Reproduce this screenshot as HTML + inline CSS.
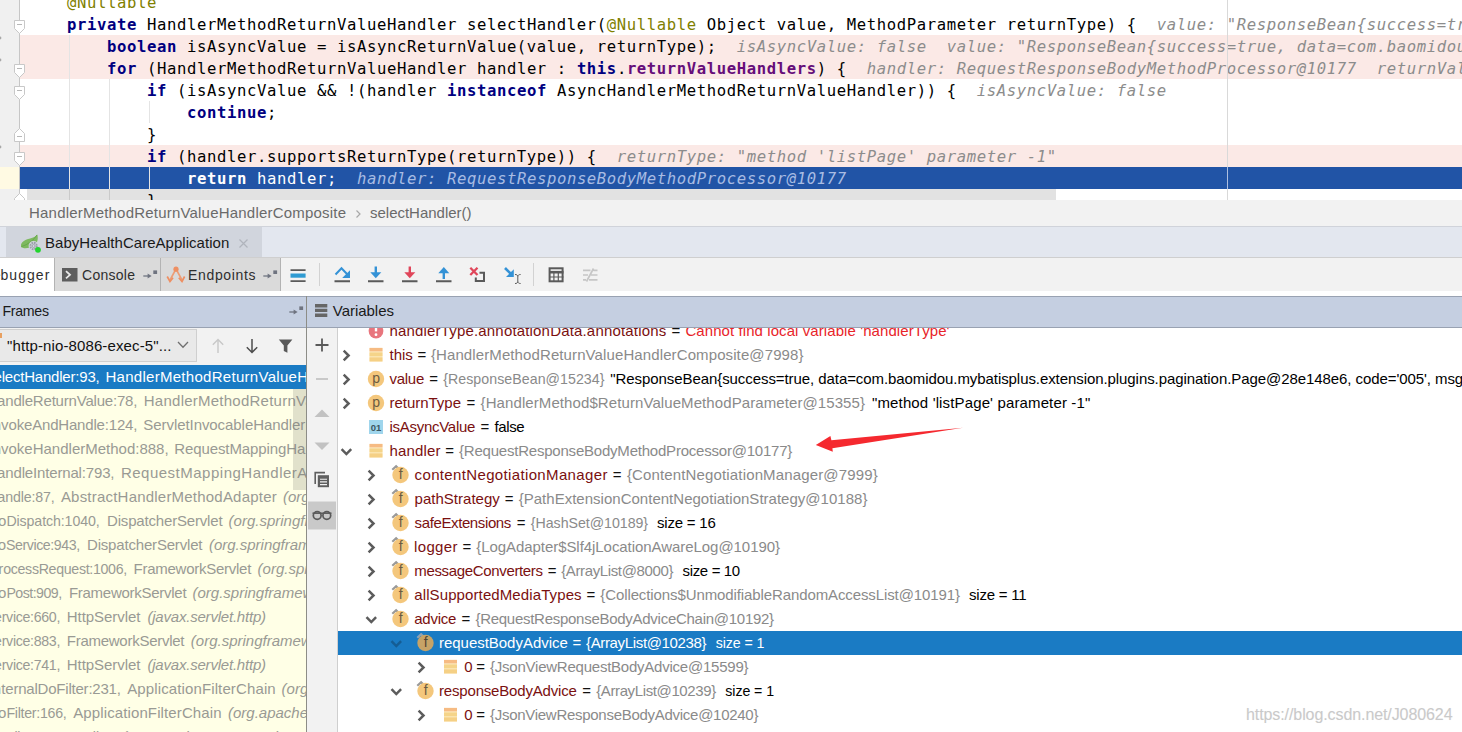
<!DOCTYPE html>
<html lang="en">
<head>
<meta charset="utf-8">
<title>Debugger</title>
<style>
*{box-sizing:border-box;margin:0;padding:0}
html,body{width:1462px;height:732px;overflow:hidden;background:#fff}
body{position:relative;font-family:"Liberation Sans",sans-serif;color:#000}
.abs{position:absolute}
/* ---------- editor ---------- */
#editor{position:absolute;left:0;top:0;width:1462px;height:200px;background:#fff;overflow:hidden}
#gutter{position:absolute;left:0;top:0;width:20px;height:200px;background:#f0f0f0;border-right:1px solid #c9c9c9}
.ln{position:absolute;left:20px;width:1442px;height:22px}
.ln.bp{background:#fbe9e6}
.ln.cur{background:#2154a6}
.code{margin-top:1px;position:absolute;left:27px;height:22px;line-height:22px;white-space:pre;font-family:"DejaVu Sans Mono","Liberation Mono",monospace;font-size:15.6px;color:#000;letter-spacing:0.609px}
.k{color:#000080;font-weight:bold}
.an{color:#808000}
.fd{color:#660e7a;font-weight:bold}
.h{color:#8c8c8c;font-style:italic}
.cur .h, .code.w .h{color:#a8bce3}
.code.w{color:#fff}
.code.w .k{color:#fff}
.guide{position:absolute;top:0;width:1px;background:#e4e4e4}
#margin{position:absolute;left:1227px;top:0;width:1px;height:200px;background:#d9d9d9;z-index:4}
/* ---------- bars ---------- */
#hscroll{position:absolute;left:20px;top:189px;width:1442px;height:11px;background:transparent}
#hthumb{position:absolute;left:7px;top:0;width:1029px;height:11px;background:rgba(0,0,0,.115)}
#crumbs{position:absolute;left:0;top:200px;width:1462px;height:26px;background:#f2f2f2;color:#6a6a6a;font-size:14.5px;line-height:27px;white-space:pre}
#tabbar{position:absolute;left:0;top:226px;width:1462px;height:31px;background:#e3e7ef;border-top:1px solid #d0d3da}
#tab1{position:absolute;left:6px;top:0;width:256px;height:30px;background:#d1d5dd}
#toolbar{position:absolute;left:0;top:257px;width:1462px;height:34px;background:#f2f2f2;border-top:1px solid #cfcfcf}
#strip{position:absolute;left:0;top:291px;width:1462px;height:6px;background:#fff}
#hdr{position:absolute;left:0;top:296px;width:1462px;height:32px;background:#c5cfe1;border-top:1px solid #99a2b2;border-bottom:1px solid #99a2b2;z-index:3}
/* ---------- frames ---------- */
#frames{position:absolute;left:0;top:327px;width:306px;height:405px;background:#ffffe6;overflow:hidden}
#vdiv{position:absolute;left:306px;top:296px;width:1px;height:436px;background:#8d8d87;z-index:4}
#vtools{position:absolute;left:307px;top:327px;width:31px;height:405px;background:#f2f2f2;border-right:1px solid #cfcfcf}
#vars{position:absolute;left:338px;top:327px;width:1124px;height:405px;background:#fff;overflow:hidden}

.t{position:absolute;white-space:pre;font-size:15px;line-height:20px;height:20px}
.pin{position:absolute}
.tbtab{position:absolute;top:0;height:34px;background:#dadada;border:1px solid #b3b3b3;border-top:0}

.fr{position:absolute;left:0;width:306px;height:24px;color:#999a94}
.fr span{position:absolute;top:2px;white-space:pre;font-size:15px;line-height:20px;height:20px}
.fr .pk{font-style:italic}
.fr.sel{background:#1a7bc4;color:#fff}
.vr{position:absolute;left:0;width:1124px;height:24px}
.vr.sel{background:#1a7bc4}
.vr .tx{position:absolute;top:2px;white-space:pre;font-size:15px;line-height:20px;height:20px;color:#000}
.vr .n{color:#7a1010}
.vr .g{color:#8a8a8a}
.vr .e{color:#e8242a}
.vr.sel .tx,.vr.sel .n,.vr.sel .g{color:#fff}
.vr .q{color:#111}
.vr svg{position:absolute}
</style>
</head>
<body>
<div id="editor">
  <div id="gutter"></div>
  <div class="ln bp" style="top:35px"></div>
  <div class="ln bp" style="top:57px"></div>
  <div class="ln bp" style="top:145px"></div>
  <div class="ln cur" style="top:167px"></div>
  <div id="curgut" class="abs" style="left:0;top:167px;width:20px;height:22px;background:#fffae3"></div>
  <div class="guide" style="left:69px;top:35px;height:165px"></div>
  <div class="guide" style="left:109px;top:79px;height:121px"></div>
  <div class="guide" style="left:149px;top:101px;height:22px"></div>
  <div class="guide" style="left:149px;top:167px;height:22px"></div>
  <div class="code" style="top:-9px">    <span class="an">@Nullable</span></div>
  <div class="code" style="top:13px">    <span class="k">private</span> HandlerMethodReturnValueHandler selectHandler(<span class="an">@Nullable</span> Object value, MethodParameter returnType) {  <span class="h">value: "ResponseBean{success=true, data=com.baomidou</span></div>
  <div class="code" style="top:35px">        <span class="k">boolean</span> isAsyncValue = isAsyncReturnValue(value, returnType);  <span class="h">isAsyncValue: false  value: "ResponseBean{success=true, data=com.baomidou.mybatisplus</span></div>
  <div class="code" style="top:57px">        <span class="k">for</span> (HandlerMethodReturnValueHandler handler : <span class="k">this</span>.<span class="fd">returnValueHandlers</span>) {  <span class="h">handler: RequestResponseBodyMethodProcessor@10177  returnValueHandlers:  size = 15</span></div>
  <div class="code" style="top:79px">            <span class="k">if</span> (isAsyncValue &amp;&amp; !(handler <span class="k">instanceof</span> AsyncHandlerMethodReturnValueHandler)) {  <span class="h">isAsyncValue: false</span></div>
  <div class="code" style="top:101px">                <span class="k">continue</span>;</div>
  <div class="code" style="top:123px">            }</div>
  <div class="code" style="top:145px">            <span class="k">if</span> (handler.supportsReturnType(returnType)) {  <span class="h">returnType: "method 'listPage' parameter -1"</span></div>
  <div class="code w" style="top:167px">                <span class="k">return</span> handler;  <span class="h">handler: RequestResponseBodyMethodProcessor@10177</span></div>
  <div class="code" style="top:189px">            }</div>
</div>
<div id="margin"></div>
<div class="abs" style="left:1227px;top:167px;width:1px;height:22px;background:#aebfe0;z-index:5"></div>
<div id="gut2" class="abs" style="left:0;top:189px;width:20px;height:11px;background:#f0f0f0"></div>
<svg id="folds" class="abs" style="left:0;top:0;z-index:5" width="30" height="200" viewBox="0 0 30 200"><path d="M19.5 0V200" stroke="#c6c6c6"/><path d="M14.5 20.5h10v8l-5 5l-5 -5z" fill="#fff" stroke="#c8c8c8"/><path d="M17 24.5h5" stroke="#b8b8b8"/><path d="M14.5 64.5h10v8l-5 5l-5 -5z" fill="#fff" stroke="#c8c8c8"/><path d="M17 68.5h5" stroke="#b8b8b8"/><path d="M14.5 86.5h10v8l-5 5l-5 -5z" fill="#fff" stroke="#c8c8c8"/><path d="M17 90.5h5" stroke="#b8b8b8"/><path d="M19.5 128.5l5 5v8h-10v-8z" fill="#fff" stroke="#c8c8c8"/><path d="M17 136.5h5" stroke="#b8b8b8"/><path d="M14.5 152.5h10v8l-5 5l-5 -5z" fill="#fff" stroke="#c8c8c8"/><path d="M17 156.5h5" stroke="#b8b8b8"/><path d="M19.5 193.5l5 5v8h-10v-8z" fill="#fff" stroke="#c8c8c8"/><path d="M17 201.5h5" stroke="#b8b8b8"/><circle cx="0" cy="38" r="1.4" fill="#a8a8a8"/><circle cx="0" cy="60" r="1.4" fill="#a8a8a8"/><circle cx="0" cy="147" r="1.4" fill="#a8a8a8"/></svg>
<div id="hscroll"><div id="hthumb"></div></div>
<div id="crumbs"><span class="t" id="c1" style="left:29.00px;top:3px;color:#6a6a6a;letter-spacing:0.203px">HandlerMethodReturnValueHandlerComposite</span><svg class="abs" style="left:354px;top:8px" width="8" height="12" viewBox="0 0 8 12"><path d="M2.5 2.5L6 6L2.5 9.5" fill="none" stroke="#a8a8a8" stroke-width="1.2"/></svg><span class="t" id="c2" style="left:370.00px;top:3px;color:#6a6a6a;letter-spacing:-0.015px">selectHandler()</span></div>
<div id="tabbar"><div id="tab1"></div>
<svg class="abs" style="left:18px;top:3.8px" width="26" height="24" viewBox="18 231 26 24">
<path d="M21 246.8C20.4 241 26 239.6 31 238.2C34 237.3 36 236 37.2 234.4C38.6 238.5 37.5 243.5 33.5 246C29.5 248.5 23 249.2 21 246.8Z" fill="#7db95f"/>
<path d="M37 235C33.5 240.5 28 244.5 21.5 246.6" stroke="#69a74c" stroke-width="1" fill="none"/>
<circle cx="33.6" cy="246" r="5" fill="#d1d5dd"/>
<circle cx="33.6" cy="246" r="3.2" fill="none" stroke="#9a9fa8" stroke-width="1.9" stroke-dasharray="1.7 0.8"/>
<circle cx="33.6" cy="246" r="1.5" fill="#d1d5dd" stroke="#9a9fa8" stroke-width="0.9"/>
<circle cx="38" cy="249.8" r="2.9" fill="#22d52e"/>
</svg>
<span class="t" id="tb1" style="left:45.00px;top:6px;color:#1a1a1a;letter-spacing:0.035px">BabyHealthCareApplication</span>
<svg class="abs" style="left:238px;top:11px" width="11" height="11" viewBox="0 0 11 11"><path d="M1.5 1.5L9.5 9.5M9.5 1.5L1.5 9.5" stroke="#b0b4bc" stroke-width="1.2"/></svg>
</div>
<div id="toolbar">
<div class="abs" style="left:0;top:0;width:54px;height:34px;background:#fff"></div>
<span class="t" id="tt0p" style="left:-17.41px;top:7px;color:#2e2e2e;font-size:14px">De</span><span class="t" id="tt0" style="left:0.50px;top:7px;color:#2e2e2e;font-size:14px;letter-spacing:1.040px">bugger</span>
<div class="tbtab" style="left:54px;width:107px"></div>
<div class="tbtab" style="left:160px;width:121px"></div>
<svg class="abs" style="left:62px;top:10px" width="16" height="14" viewBox="0 0 16 14"><rect x="0" y="0" width="15.5" height="13.5" fill="#5d5d5d"/><path d="M4 3.2L8 6.8L4 10.4" fill="none" stroke="#e8e8e8" stroke-width="1.8"/></svg>
<span class="t" id="tt1" style="left:82.00px;top:7px;color:#2e2e2e;font-size:14px;letter-spacing:0.271px">Console</span>
<svg class="pin" style="left:143px;top:12px" width="15" height="10" viewBox="0 0 15 10"><path d="M0.3 6H5" fill="none" stroke="#6f7480" stroke-width="1.3"/><path d="M4.6 3.4L8.6 6L4.6 8.6Z" fill="#6f7480"/><rect x="10.3" y="0.4" width="3.8" height="3.6" fill="#6f7480"/></svg>
<svg class="abs" style="left:166px;top:7px" width="20" height="20" viewBox="0 0 20 20"><path d="M10 4L4 15M10 4L16 15" stroke="#ec9d76" stroke-width="1.6" fill="none"/><circle cx="10" cy="4.2" r="2.6" fill="#ee8f62"/><path d="M1.2 11.5L4 16.5L7 12.8M12.8 12.8L16 16.5L18.6 11.5" stroke="#ee8f62" stroke-width="1.7" fill="none"/></svg>
<span class="t" id="tt2" style="left:188.00px;top:7px;color:#2e2e2e;font-size:14px;letter-spacing:0.666px">Endpoints</span>
<svg class="pin" style="left:263px;top:12px" width="15" height="10" viewBox="0 0 15 10"><path d="M0.3 6H5" fill="none" stroke="#6f7480" stroke-width="1.3"/><path d="M4.6 3.4L8.6 6L4.6 8.6Z" fill="#6f7480"/><rect x="10.3" y="0.4" width="3.8" height="3.6" fill="#6f7480"/></svg>
<svg class="abs" style="left:285px;top:-1px" width="330" height="34" viewBox="285 257 330 34">
<g fill="none">
<path d="M290.5 270.1H305.6M290.5 281.1H305.6" stroke="#5a5a5a" stroke-width="1.9"/>
<path d="M290.5 275.6H305.6" stroke="#2f9bd2" stroke-width="4.2"/>
<path d="M319.5 263V286M533.5 263V286" stroke="#d2d2d2"/>
<!-- underlines -->
<path d="M334.5 281.2H350M368 281.2H383.5M402 281.2H417.5M436 281.2H451.5" stroke="#5a5a5a" stroke-width="2"/>
<!-- step over -->
<path d="M335.5 274.5L341.5 268.3L348.2 275.2" stroke="#3492d6" stroke-width="2"/>
<path d="M350 270.2V278H342.2Z" fill="#3492d6"/>
<!-- step into -->
<path d="M375.8 266.5V274" stroke="#3492d6" stroke-width="2.4"/><path d="M370.3 272.2H381.3L375.8 278.3Z" fill="#3492d6"/>
<!-- force step into -->
<path d="M409.8 266.5V274" stroke="#e0465a" stroke-width="2.4"/><path d="M404.3 272.2H415.3L409.8 278.3Z" fill="#e0465a"/>
<!-- step out -->
<path d="M443.8 271.5V279" stroke="#3492d6" stroke-width="2.4"/><path d="M438.3 273.2H449.3L443.8 267Z" fill="#3492d6"/>
<!-- drop frame -->
<path d="M470.3 267.8L477.5 275M477.5 267.8L470.3 275" stroke="#e0465a" stroke-width="2.3"/>
<path d="M479.5 272.8H484V281H475.8V277.5" stroke="#5a5a5a" stroke-width="2"/>
<!-- run to cursor -->
<path d="M505 268L511 274" stroke="#3492d6" stroke-width="2.6"/><path d="M513.8 269.2V277H506Z" fill="#3492d6"/>
<path d="M515 274.5C516.5 274.5 517.8 275 517.8 276.5V281.5C517.8 283 516.5 283.5 515 283.5M520.6 274.5C519.1 274.5 517.8 275 517.8 276.5M517.8 281.5C517.8 283 519.1 283.5 520.6 283.5" stroke="#5a5a5a" stroke-width="1"/>
<!-- calculator -->
<rect x="549.6" y="268.3" width="13" height="13" stroke="#5a5a5a" stroke-width="2"/>
<path d="M549 272.2H563.5" stroke="#5a5a5a" stroke-width="2.6"/>
<path d="M553.9 273V281.5M558.3 273V281.5M549 277H563.5" stroke="#5a5a5a" stroke-width="1.2"/>
<!-- trace -->
<path d="M583 270.3H590.5M593.5 270.3H597.5M583 275H588M591 275H597.5M583 279.8H586M589 279.8H597.5M593.5 268.5L586.5 281.5" stroke="#c6c6c6" stroke-width="1.7"/>
</g>
</svg>
</div>
<div id="strip"></div>
<div id="hdr">
<span class="t" id="h1" style="left:2.50px;top:4.2px;color:#1a1a1a;letter-spacing:-0.317px;font-size:14.2px">Frames</span>
<svg class="pin" style="left:289px;top:9px" width="15" height="10" viewBox="0 0 15 10"><path d="M0.3 6H5" fill="none" stroke="#6f7480" stroke-width="1.3"/><path d="M4.6 3.4L8.6 6L4.6 8.6Z" fill="#6f7480"/><rect x="10.3" y="0.4" width="3.8" height="3.6" fill="#6f7480"/></svg>
<svg class="abs" style="left:315px;top:6.8px" width="13" height="14" viewBox="0 0 13 14"><path d="M0 1.7H12.3M0 6.4H12.3M0 11.2H12.3" stroke="#666" stroke-width="3.4"/></svg>
<span class="t" id="h2" style="left:332.80px;top:4.2px;color:#1a1a1a;letter-spacing:-0.028px">Variables</span>
</div>
<div id="frames">
<div class="abs" style="left:0;top:0;width:306px;height:38px;background:#f2f2f2"></div>
<div class="abs" id="dd" style="left:-2px;top:2px;width:199px;height:33px;background:#e9e9e9;border:1px solid #cfcfcf"></div>
<div class="abs" style="left:0;top:6px;width:1.5px;height:5px;background:#e8a060"></div>
<span class="t" id="ddt" style="left:7.00px;top:9px;color:#111;letter-spacing:0.118px">"http-nio-8086-exec-5"...</span>
<svg class="abs" style="left:176px;top:13px" width="14" height="10" viewBox="0 0 14 10"><path d="M2 2L7 7.2L12 2" fill="none" stroke="#707070" stroke-width="1.3"/></svg>
<svg class="abs" style="left:205px;top:6px" width="95" height="26" viewBox="205 333 95 26"><g fill="none"><path d="M218 353V339.5M212.8 344.8L218 339.5L223.2 344.8" stroke="#c8c8c8" stroke-width="1.4"/><path d="M252 339V352.5M246.8 347.2L252 352.5L257.2 347.2" stroke="#4d4d4d" stroke-width="1.5"/><path d="M278.8 339.5H292.4L287.4 345.6V352.8L283.8 351V345.6Z" fill="#595959"/></g></svg>
<div class="fr sel" style="top:38px"><span id="fp0" style="left:-14.14px">se</span><span id="fa0" style="left:1.70px;letter-spacing:-0.207px">lectHandler:93,</span><span id="fb0" style="left:105.40px;letter-spacing:0.289px">HandlerMethodReturnValueHandlerComposite</span><span class="pk" id="fc0" style="left:400.00px">(org.springframework.web.method.support)</span></div>
<div class="fr" style="top:62px"><span id="fp1" style="left:-11.39px">ha</span><span id="fa1" style="left:5.30px;letter-spacing:-0.197px">ndleReturnValue:78,</span><span id="fb1" style="left:143.80px;letter-spacing:0.245px">HandlerMethodReturnValueHandlerComposite</span><span class="pk" id="fc1" style="left:400.00px">(org.springframework.web.method.support)</span></div>
<div class="fr" style="top:86px"><span id="fp2" style="left:-10.69px">inv</span><span id="fa2" style="left:8.50px;letter-spacing:-0.180px">okeAndHandle:124,</span><span id="fb2" style="left:143.30px;letter-spacing:-0.065px">ServletInvocableHandlerMethod</span><span class="pk" id="fc2" style="left:400.00px">(org.springframework.web.servlet.mvc.method.annotation)</span></div>
<div class="fr" style="top:110px"><span id="fp3" style="left:-10.69px">inv</span><span id="fa3" style="left:8.50px;letter-spacing:-0.000px">okeHandlerMethod:888,</span><span id="fb3" style="left:174.30px;letter-spacing:-0.106px">RequestMappingHandlerAdapter</span><span class="pk" id="fc3" style="left:400.00px">(org.springframework.web.servlet.mvc.method.annotation)</span></div>
<div class="fr" style="top:134px"><span id="fp4" style="left:-11.39px">ha</span><span id="fa4" style="left:5.30px;letter-spacing:-0.160px">ndleInternal:793,</span><span id="fb4" style="left:120.90px;letter-spacing:0.502px">RequestMappingHandlerAdapter</span><span class="pk" id="fc4" style="left:400.00px">(org.springframework.web.servlet.mvc.method.annotation)</span></div>
<div class="fr" style="top:158px"><span id="fp5" style="left:-11.39px">ha</span><span id="fa5" style="left:5.30px;letter-spacing:-0.157px;font-size:14.2px">ndle:87,</span><span id="fb5" style="left:60.90px;letter-spacing:0.210px">AbstractHandlerMethodAdapter</span><span class="pk" id="fc5" style="left:283.00px">(org.springframework.web.servlet.mvc.method)</span></div>
<div class="fr" style="top:182px"><span id="fp6" style="left:-10.29px">do</span><span id="fa6" style="left:6.40px;letter-spacing:-0.104px;font-size:14.2px">Dispatch:1040,</span><span id="fb6" style="left:107.00px;letter-spacing:-0.175px">DispatcherServlet</span><span class="pk" id="fc6" style="left:228.60px">(org.springframework.web.servlet)</span></div>
<div class="fr" style="top:206px"><span id="fp7" style="left:-10.69px">do</span><span id="fa7" style="left:6.00px;letter-spacing:-0.424px;font-size:14.2px">Service:943,</span><span id="fb7" style="left:87.00px;letter-spacing:-0.181px">DispatcherServlet</span><span class="pk" id="fc7" style="left:208.90px">(org.springframework.web.servlet)</span></div>
<div class="fr" style="top:230px"><span id="fp8" style="left:-10.14px">pr</span><span id="fa8" style="left:3.20px;letter-spacing:-0.315px;font-size:14.2px">ocessRequest:1006,</span><span id="fb8" style="left:133.60px;letter-spacing:-0.266px">FrameworkServlet</span><span class="pk" id="fc8" style="left:257.60px">(org.springframework.web.servlet)</span></div>
<div class="fr" style="top:254px"><span id="fp9" style="left:-10.29px">do</span><span id="fa9" style="left:6.40px;letter-spacing:-0.531px;font-size:14.2px">Post:909,</span><span id="fb9" style="left:68.90px;letter-spacing:-0.266px">FrameworkServlet</span><span class="pk" id="fc9" style="left:192.50px">(org.springframework.web.servlet)</span></div>
<div class="fr" style="top:278px"><span id="fp10" style="left:-14.14px">se</span><span id="fa10" style="left:1.70px;letter-spacing:-0.313px;font-size:14.2px">rvice:660,</span><span id="fb10" style="left:66.80px;letter-spacing:-0.061px">HttpServlet</span><span class="pk" id="fc10" style="left:147.40px;letter-spacing:-0.203px">(javax.servlet.http)</span></div>
<div class="fr" style="top:302px"><span id="fp11" style="left:-14.14px">se</span><span id="fa11" style="left:1.70px;letter-spacing:-0.313px;font-size:14.2px">rvice:883,</span><span id="fb11" style="left:66.80px;letter-spacing:-0.266px">FrameworkServlet</span><span class="pk" id="fc11" style="left:190.80px">(org.springframework.web.servlet)</span></div>
<div class="fr" style="top:326px"><span id="fp12" style="left:-14.14px">se</span><span id="fa12" style="left:1.70px;letter-spacing:-0.313px;font-size:14.2px">rvice:741,</span><span id="fb12" style="left:66.80px;letter-spacing:-0.061px">HttpServlet</span><span class="pk" id="fc12" style="left:147.40px;letter-spacing:-0.203px">(javax.servlet.http)</span></div>
<div class="fr" style="top:350px"><span id="fp13" style="left:-10.54px">int</span><span id="fa13" style="left:5.30px;letter-spacing:-0.213px">ernalDoFilter:231,</span><span id="fb13" style="left:127.20px;letter-spacing:0.123px">ApplicationFilterChain</span><span class="pk" id="fc13" style="left:281.60px">(org.apache.catalina.core)</span></div>
<div class="fr" style="top:374px"><span id="fp14" style="left:-10.29px">do</span><span id="fa14" style="left:6.40px;letter-spacing:-0.269px;font-size:14.2px">Filter:166,</span><span id="fb14" style="left:73.20px;letter-spacing:0.118px">ApplicationFilterChain</span><span class="pk" id="fc14" style="left:228.00px">(org.apache.catalina.core)</span></div>
<div class="fr" style="top:398px"><span id="fp15" style="left:-10.29px">do</span><span id="fa15" style="left:6.40px;letter-spacing:-0.511px;font-size:14.2px">Filter:53,</span><span id="fb15" style="left:63.60px;letter-spacing:-0.002px;font-size:14.2px">WsFilter</span><span class="pk" id="fc15" style="left:122.00px">(org.apache.tomcat.websocket.server)</span></div>
<div class="abs" id="fsb" style="left:293px;top:62px;width:13px;height:101px;background:rgba(120,120,110,.22)"></div>
</div>
<div id="vdiv"></div>
<div id="vtools"><svg class="abs" style="left:0;top:0" width="31" height="405" viewBox="307 327 31 405"><g fill="none">
<path d="M315.5 345H328.5M322 338.5V351.5" stroke="#5a5a5a" stroke-width="1.8"/>
<path d="M316 379H328" stroke="#c4c4c4" stroke-width="1.8"/>
<path d="M314.5 417L322 409.5L329.5 417Z" fill="#c2c2c2"/>
<path d="M314.5 442.5L322 450L329.5 442.5Z" fill="#c2c2c2"/>
<path d="M315.2 484V472.6H325" stroke="#5f5f5f" stroke-width="1.6"/>
<rect x="317.8" y="475.2" width="11.2" height="12" fill="#5f5f5f"/>
<path d="M320 479.2H327M320 481.9H327M320 484.6H327" stroke="#f2f2f2" stroke-width="1.1"/>
<rect x="308" y="501.5" width="28" height="28" fill="#c9c9c9"/>
<circle cx="317.2" cy="515.5" r="3.9" stroke="#5a5a5a" stroke-width="1.7"/><circle cx="326.8" cy="515.5" r="3.9" stroke="#5a5a5a" stroke-width="1.7"/>
<path d="M312.5 513.2H331.5" stroke="#5a5a5a" stroke-width="1.5"/>
</g></svg></div>
<div id="vars">
<div class="vr" style="top:-8px"><span class="tx n" id="v0_0" style="left:51.50px;letter-spacing:0.175px">handlerType.annotationData.annotations</span><span class="tx q" style="left:333.42px">=</span><span class="tx e" id="v0_1" style="left:347.40px;letter-spacing:0.082px">Cannot find local variable 'handlerType'</span></div>
<div class="vr" style="top:16px"><span class="tx n" id="v1_0" style="left:51.50px;letter-spacing:-0.019px">this</span><span class="tx q" style="left:79.47px">=</span><span class="tx g" id="v1_1" style="left:92.90px;letter-spacing:0.107px">{HandlerMethodReturnValueHandlerComposite@7998}</span></div>
<div class="vr" style="top:40px"><span class="tx n" id="v2_0" style="left:51.50px;letter-spacing:-0.268px">value</span><span class="tx q" style="left:91.37px">=</span><span class="tx g" id="v2_1" style="left:105.20px;letter-spacing:0.050px;font-size:14.2px">{ResponseBean@15234}</span><span class="tx b" id="v2_2" style="left:272.30px;letter-spacing:-0.074px">"ResponseBean{success=true, data=com.baomidou.mybatisplus.extension.plugins.pagination.Page@28e148e6, code='005', msg='ok'}"</span></div>
<div class="vr" style="top:64px"><span class="tx n" id="v3_0" style="left:51.50px;letter-spacing:-0.024px">returnType</span><span class="tx q" style="left:128.42px">=</span><span class="tx g" id="v3_1" style="left:142.60px;letter-spacing:0.089px">{HandlerMethod$ReturnValueMethodParameter@15355}</span><span class="tx b" id="v3_2" style="left:534.00px;letter-spacing:0.139px">"method 'listPage' parameter -1"</span></div>
<div class="vr" style="top:88px"><span class="tx n" id="v4_0" style="left:51.50px;letter-spacing:-0.276px">isAsyncValue</span><span class="tx q" style="left:142.62px">=</span><span class="tx b" id="v4_1" style="left:156.60px;letter-spacing:-0.397px">false</span></div>
<div class="vr" style="top:112px"><span class="tx n" id="v5_0" style="left:51.50px;letter-spacing:0.141px">handler</span><span class="tx q" style="left:107.32px">=</span><span class="tx g" id="v5_1" style="left:121.00px;letter-spacing:-0.213px">{RequestResponseBodyMethodProcessor@10177}</span></div>
<div class="vr" style="top:136px"><span class="tx n" id="v6_0" style="left:76.60px;letter-spacing:0.354px">contentNegotiationManager</span><span class="tx q" style="left:274.77px">=</span><span class="tx g" id="v6_1" style="left:288.90px;letter-spacing:0.147px">{ContentNegotiationManager@7999}</span></div>
<div class="vr" style="top:160px"><span class="tx n" id="v7_0" style="left:76.60px;letter-spacing:0.012px">pathStrategy</span><span class="tx q" style="left:166.87px">=</span><span class="tx g" id="v7_1" style="left:180.70px;letter-spacing:0.016px">{PathExtensionContentNegotiationStrategy@10188}</span></div>
<div class="vr" style="top:184px"><span class="tx n" id="v8_0" style="left:76.60px;letter-spacing:-0.387px">safeExtensions</span><span class="tx q" style="left:178.67px">=</span><span class="tx g" id="v8_1" style="left:192.80px;letter-spacing:-0.033px;font-size:14.2px">{HashSet@10189}</span><span class="tx b" id="v8_2" style="left:319.00px;letter-spacing:-0.207px">size = 16</span></div>
<div class="vr" style="top:208px"><span class="tx n" id="v9_0" style="left:76.10px;letter-spacing:0.318px">logger</span><span class="tx q" style="left:124.42px">=</span><span class="tx g" id="v9_1" style="left:138.20px;letter-spacing:-0.057px">{LogAdapter$Slf4jLocationAwareLog@10190}</span></div>
<div class="vr" style="top:232px"><span class="tx n" id="v10_0" style="left:76.30px;letter-spacing:-0.345px">messageConverters</span><span class="tx q" style="left:209.72px">=</span><span class="tx g" id="v10_1" style="left:223.20px;letter-spacing:-0.373px">{ArrayList@8000}</span><span class="tx b" id="v10_2" style="left:344.60px;letter-spacing:-0.357px">size = 10</span></div>
<div class="vr" style="top:256px"><span class="tx n" id="v11_0" style="left:76.30px;letter-spacing:0.104px">allSupportedMediaTypes</span><span class="tx q" style="left:248.57px">=</span><span class="tx g" id="v11_1" style="left:262.30px;letter-spacing:-0.104px">{Collections$UnmodifiableRandomAccessList@10191}</span><span class="tx b" id="v11_2" style="left:631.00px;letter-spacing:-0.207px">size = 11</span></div>
<div class="vr" style="top:280px"><span class="tx n" id="v12_0" style="left:76.30px;letter-spacing:-0.274px">advice</span><span class="tx q" style="left:123.47px">=</span><span class="tx g" id="v12_1" style="left:137.40px;letter-spacing:-0.272px">{RequestResponseBodyAdviceChain@10192}</span></div>
<div class="vr sel" style="top:304px"><span class="tx n" id="v13_0" style="left:101.00px;letter-spacing:-0.029px">requestBodyAdvice</span><span class="tx q" style="left:234.52px">=</span><span class="tx g" id="v13_1" style="left:248.00px;letter-spacing:-0.347px">{ArrayList@10238}</span><span class="tx b" id="v13_2" style="left:377.70px;letter-spacing:-0.071px;font-size:14.2px">size = 1</span></div>
<div class="vr" style="top:328px"><span class="tx n" id="v14_0" style="left:126.30px">0</span><span class="tx q" style="left:138.22px">=</span><span class="tx g" id="v14_1" style="left:152.00px;letter-spacing:-0.233px">{JsonViewRequestBodyAdvice@15599}</span></div>
<div class="vr" style="top:352px"><span class="tx n" id="v15_0" style="left:101.00px;letter-spacing:-0.178px">responseBodyAdvice</span><span class="tx q" style="left:244.17px">=</span><span class="tx g" id="v15_1" style="left:258.20px;letter-spacing:-0.384px">{ArrayList@10239}</span><span class="tx b" id="v15_2" style="left:387.30px;letter-spacing:-0.071px;font-size:14.2px">size = 1</span></div>
<div class="vr" style="top:376px"><span class="tx n" id="v16_0" style="left:126.30px">0</span><span class="tx q" style="left:138.22px">=</span><span class="tx g" id="v16_1" style="left:152.00px;letter-spacing:-0.280px">{JsonViewResponseBodyAdvice@10240}</span></div>
<svg id="vicons" class="abs" style="left:0;top:0" width="200" height="405" viewBox="0 0 200 405"><circle cx="38.0" cy="4.0" r="7.4" fill="#e8757d"/><path d="M38.0 -0.8v5.2" stroke="#fff" stroke-width="2.4"/><circle cx="38.0" cy="7.7" r="1.4" fill="#fff"/><path d="M5.7 23.7l4.9 4.8l-4.9 4.8" fill="none" stroke="#5c5c5c" stroke-width="2.5"/><rect x="31.5" y="20.9" width="13" height="13.6" fill="#fdeec9"/><rect x="31.5" y="20.9" width="13" height="3.5" fill="#f6bb83"/><rect x="31.5" y="25.4" width="13" height="4" fill="#f5d489"/><rect x="31.5" y="30.3" width="13" height="4.2" fill="#f5d085"/><path d="M5.7 47.7l4.9 4.8l-4.9 4.8" fill="none" stroke="#5c5c5c" stroke-width="2.5"/><circle cx="38.0" cy="52.0" r="8.2" fill="#f4c77c"/><text x="38.2" y="56.4" text-anchor="middle" font-family="Liberation Sans, sans-serif" font-size="14" fill="#6b5b41">p</text><path d="M5.7 71.7l4.9 4.8l-4.9 4.8" fill="none" stroke="#5c5c5c" stroke-width="2.5"/><circle cx="38.0" cy="76.0" r="8.2" fill="#f4c77c"/><text x="38.2" y="80.4" text-anchor="middle" font-family="Liberation Sans, sans-serif" font-size="14" fill="#6b5b41">p</text><rect x="31.0" y="93.0" width="14" height="14" fill="#9fd5ec"/><text x="38.0" y="103.6" text-anchor="middle" font-family="Liberation Sans, sans-serif" font-size="9.5" font-weight="bold" fill="#3b5560">01</text><path d="M3.6 122.1l4.8 4.9l4.8 -4.9" fill="none" stroke="#5c5c5c" stroke-width="2.5"/><rect x="31.5" y="116.9" width="13" height="13.6" fill="#fdeec9"/><rect x="31.5" y="116.9" width="13" height="3.5" fill="#f6bb83"/><rect x="31.5" y="121.4" width="13" height="4" fill="#f5d489"/><rect x="31.5" y="126.3" width="13" height="4.2" fill="#f5d085"/><path d="M30.6 143.7l4.9 4.8l-4.9 4.8" fill="none" stroke="#5c5c5c" stroke-width="2.5"/><path d="M54.3 142.8l3.8 -3.6l2.4 2.4" fill="none" stroke="#9a9a9a" stroke-width="2.2"/><circle cx="62.5" cy="148.0" r="8.2" fill="#f4c77c"/><text x="62.7" y="152.4" text-anchor="middle" font-family="Liberation Sans, sans-serif" font-size="14" fill="#6b5b41">f</text><path d="M30.6 167.7l4.9 4.8l-4.9 4.8" fill="none" stroke="#5c5c5c" stroke-width="2.5"/><path d="M54.3 166.8l3.8 -3.6l2.4 2.4" fill="none" stroke="#9a9a9a" stroke-width="2.2"/><circle cx="62.5" cy="172.0" r="8.2" fill="#f4c77c"/><text x="62.7" y="176.4" text-anchor="middle" font-family="Liberation Sans, sans-serif" font-size="14" fill="#6b5b41">f</text><path d="M30.6 191.7l4.9 4.8l-4.9 4.8" fill="none" stroke="#5c5c5c" stroke-width="2.5"/><path d="M54.3 190.8l3.8 -3.6l2.4 2.4" fill="none" stroke="#9a9a9a" stroke-width="2.2"/><circle cx="62.5" cy="196.0" r="8.2" fill="#f4c77c"/><text x="62.7" y="200.4" text-anchor="middle" font-family="Liberation Sans, sans-serif" font-size="14" fill="#6b5b41">f</text><path d="M30.6 215.7l4.9 4.8l-4.9 4.8" fill="none" stroke="#5c5c5c" stroke-width="2.5"/><path d="M54.3 214.8l3.8 -3.6l2.4 2.4" fill="none" stroke="#9a9a9a" stroke-width="2.2"/><circle cx="62.5" cy="220.0" r="8.2" fill="#f4c77c"/><text x="62.7" y="224.4" text-anchor="middle" font-family="Liberation Sans, sans-serif" font-size="14" fill="#6b5b41">f</text><path d="M30.6 239.7l4.9 4.8l-4.9 4.8" fill="none" stroke="#5c5c5c" stroke-width="2.5"/><path d="M54.3 238.8l3.8 -3.6l2.4 2.4" fill="none" stroke="#9a9a9a" stroke-width="2.2"/><circle cx="62.5" cy="244.0" r="8.2" fill="#f4c77c"/><text x="62.7" y="248.4" text-anchor="middle" font-family="Liberation Sans, sans-serif" font-size="14" fill="#6b5b41">f</text><path d="M30.6 263.7l4.9 4.8l-4.9 4.8" fill="none" stroke="#5c5c5c" stroke-width="2.5"/><path d="M54.3 262.8l3.8 -3.6l2.4 2.4" fill="none" stroke="#9a9a9a" stroke-width="2.2"/><circle cx="62.5" cy="268.0" r="8.2" fill="#f4c77c"/><text x="62.7" y="272.4" text-anchor="middle" font-family="Liberation Sans, sans-serif" font-size="14" fill="#6b5b41">f</text><path d="M28.5 290.1l4.8 4.9l4.8 -4.9" fill="none" stroke="#5c5c5c" stroke-width="2.5"/><path d="M54.3 286.8l3.8 -3.6l2.4 2.4" fill="none" stroke="#9a9a9a" stroke-width="2.2"/><circle cx="62.5" cy="292.0" r="8.2" fill="#f4c77c"/><text x="62.7" y="296.4" text-anchor="middle" font-family="Liberation Sans, sans-serif" font-size="14" fill="#6b5b41">f</text><path d="M53.5 314.1l4.8 4.9l4.8 -4.9" fill="none" stroke="#155d94" stroke-width="2.5"/><path d="M79.3 310.8l3.8 -3.6l2.4 2.4" fill="none" stroke="#8fa3b5" stroke-width="2.2"/><circle cx="87.5" cy="316.0" r="8.2" fill="#c6a367"/><text x="87.7" y="320.4" text-anchor="middle" font-family="Liberation Sans, sans-serif" font-size="14" fill="#4f4535">f</text><path d="M80.6 335.7l4.9 4.8l-4.9 4.8" fill="none" stroke="#5c5c5c" stroke-width="2.5"/><rect x="106.0" y="332.9" width="13" height="13.6" fill="#fdeec9"/><rect x="106.0" y="332.9" width="13" height="3.5" fill="#f6bb83"/><rect x="106.0" y="337.4" width="13" height="4" fill="#f5d489"/><rect x="106.0" y="342.3" width="13" height="4.2" fill="#f5d085"/><path d="M53.5 362.1l4.8 4.9l4.8 -4.9" fill="none" stroke="#5c5c5c" stroke-width="2.5"/><path d="M79.3 358.8l3.8 -3.6l2.4 2.4" fill="none" stroke="#9a9a9a" stroke-width="2.2"/><circle cx="87.5" cy="364.0" r="8.2" fill="#f4c77c"/><text x="87.7" y="368.4" text-anchor="middle" font-family="Liberation Sans, sans-serif" font-size="14" fill="#6b5b41">f</text><path d="M80.6 383.7l4.9 4.8l-4.9 4.8" fill="none" stroke="#5c5c5c" stroke-width="2.5"/><rect x="106.0" y="380.9" width="13" height="13.6" fill="#fdeec9"/><rect x="106.0" y="380.9" width="13" height="3.5" fill="#f6bb83"/><rect x="106.0" y="385.4" width="13" height="4" fill="#f5d489"/><rect x="106.0" y="390.3" width="13" height="4.2" fill="#f5d085"/></svg>
<svg class="abs" style="left:462px;top:93px" width="180" height="40" viewBox="800 420 180 40"><path d="M815.8 445L830.4 436L831.4 440.2L963 427.8L832.4 448.2L832.8 451.8Z" fill="#f5292f"/></svg>
<span class="t" id="wm" style="left:908.00px;top:377.5px;font-size:16px;color:#c9c9c9;text-shadow:0 0 2px #fff,0 0 1px #eee;letter-spacing:-0.088px">https://blog.csdn.net/J080624</span>
</div>
</body>
</html>
